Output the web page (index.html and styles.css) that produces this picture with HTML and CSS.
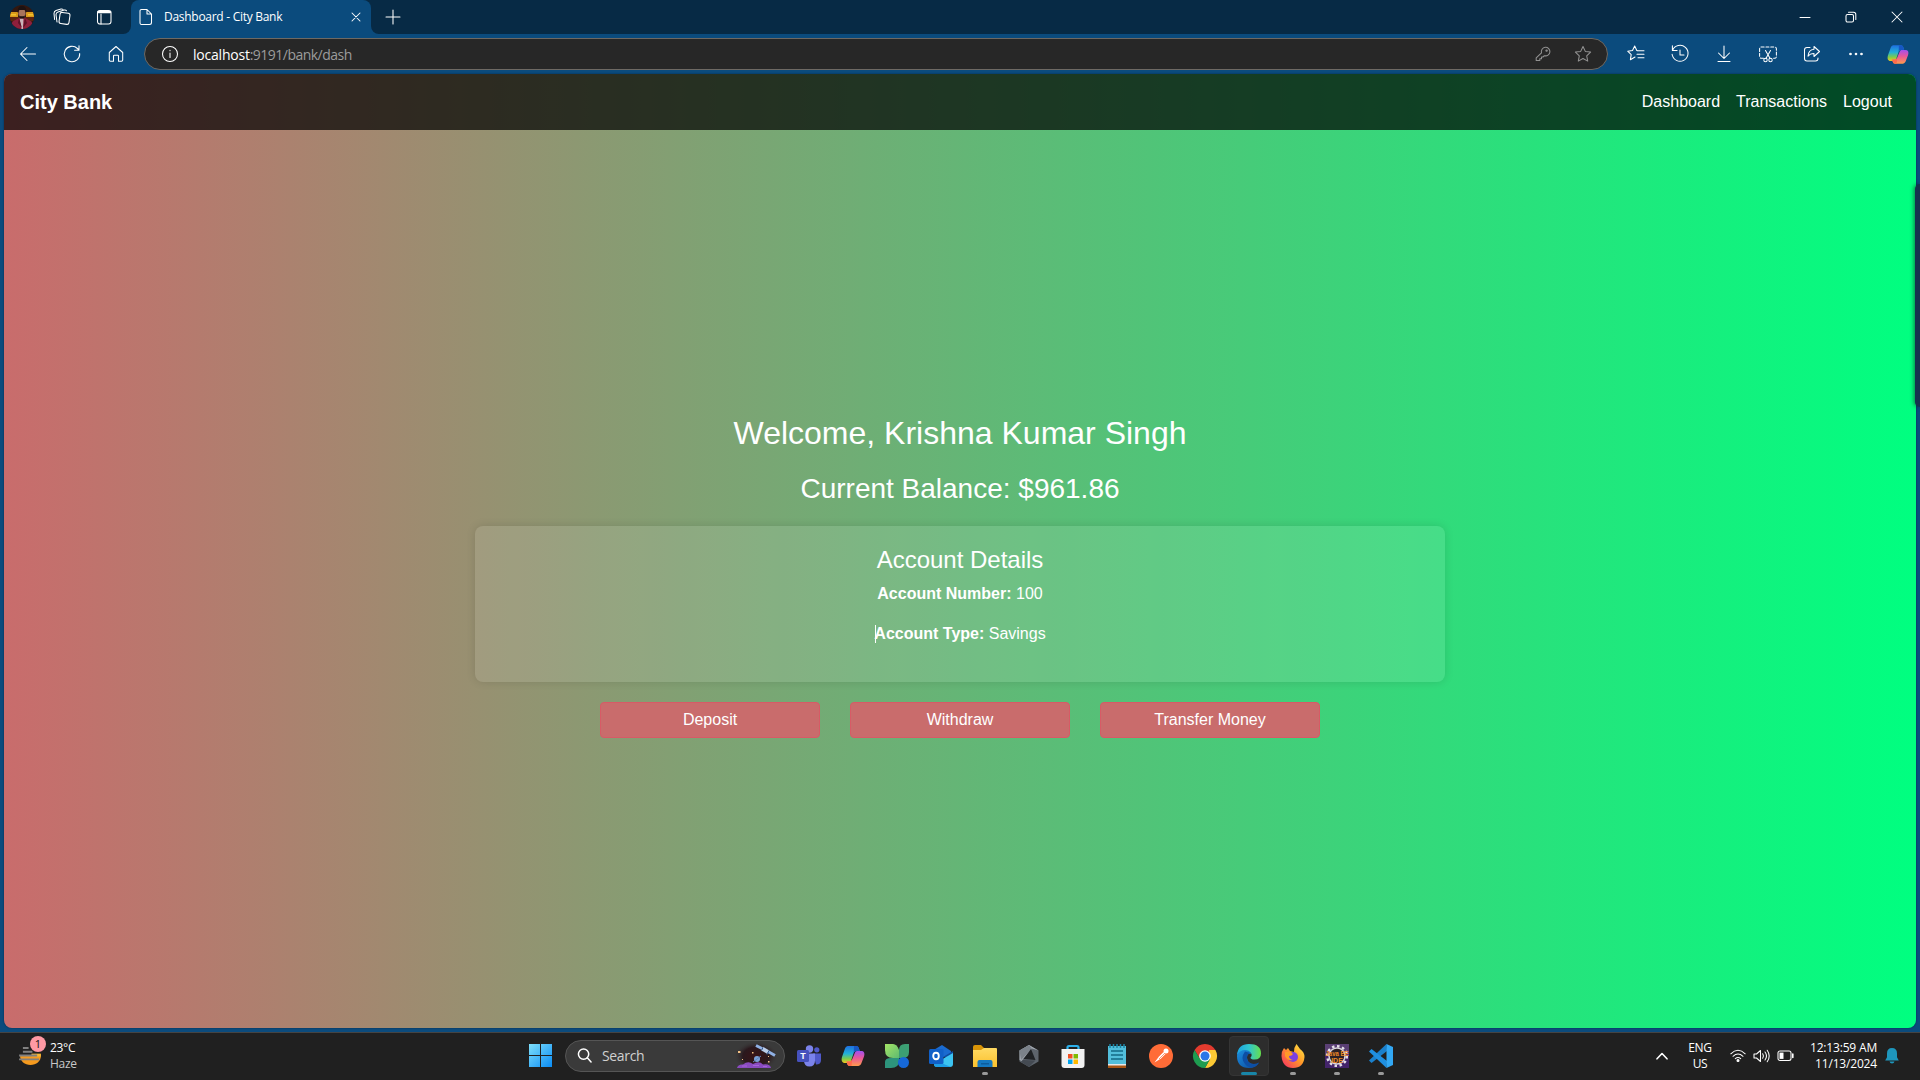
FILE: index.html
```html
<!DOCTYPE html>
<html lang="en">
<head>
<meta charset="utf-8">
<title>Dashboard - City Bank</title>
<link rel="stylesheet" href="styles.css">
</head>
<body>
<svg class="defs" width="0" height="0" aria-hidden="true">
  <defs>
    <linearGradient id="cpA" x1="0" y1="0" x2="0" y2="1"><stop offset="0" stop-color="#1f6fe0"/><stop offset=".45" stop-color="#22b0d8"/><stop offset=".75" stop-color="#7ccb4c"/><stop offset="1" stop-color="#f2c81c"/></linearGradient>
    <linearGradient id="cpB" x1="0" y1="0" x2="0" y2="1"><stop offset="0" stop-color="#a050f0"/><stop offset=".45" stop-color="#e6569c"/><stop offset="1" stop-color="#ff9a4c"/></linearGradient>
    <linearGradient id="win" x1="0" y1="0" x2="1" y2="1"><stop offset="0" stop-color="#7fe0fb"/><stop offset="1" stop-color="#0a8cf5"/></linearGradient>
    <linearGradient id="leaf" x1="0" y1="0" x2="1" y2="1"><stop offset="0" stop-color="#a4e465"/><stop offset="1" stop-color="#5fbb70"/></linearGradient>
    <linearGradient id="fold" x1="0" y1="0" x2="0" y2="1"><stop offset="0" stop-color="#ffda63"/><stop offset="1" stop-color="#fbc02d"/></linearGradient>
    <linearGradient id="edgeA" x1="0" y1="0" x2="1" y2="0"><stop offset="0" stop-color="#1ba3e2"/><stop offset=".5" stop-color="#30c5cf"/><stop offset="1" stop-color="#66e04c"/></linearGradient>
    <linearGradient id="edgeB" x1="0" y1="0" x2="1" y2="1"><stop offset="0" stop-color="#1b8fe0"/><stop offset="1" stop-color="#0c4a9c"/></linearGradient>
    <linearGradient id="fox" x1="1" y1="0" x2="0" y2="1"><stop offset="0" stop-color="#fff04a"/><stop offset=".45" stop-color="#ff9a28"/><stop offset="1" stop-color="#f5266a"/></linearGradient>
    <symbol id="copilot" viewBox="0 0 24 22">
      <path fill="url(#cpA)" d="M8 1h7c2 0 2.600 1.300 3.100 3L18.700 6h-3.200c-1.800 0-2.500 1-3 2.500L10 16c-.6 1.500-1.500 2-3 2H4C1 18 0 15.500 1 12L4 3.500C4.800 1.600 6 1 8 1z"/>
      <path fill="url(#cpB)" d="M16 21H9c-2 0-2.500-1.300-3-3l-.5-1.500h3c1.500 0 2.300-1 2.800-2.500L13.800 8c.5-1.400 1.300-2 3-2H20c3 0 4 2 3 5.500l-2.700 7C19.500 20.400 18 21 16 21z"/>
      <path fill="#1757c4" d="M13 1h2c2 0 2.600 1.300 3.100 3L18.700 6h-3.200c-1.500 0-2.300.7-2.800 2z"/>
      <path fill="#ff6a4a" d="M6 18l-.5-1.500h3c1.500 0 2.300-1 2.800-2.500L10.500 21H9c-2 0-2.500-1.300-3-3z"/>
    </symbol>
  </defs>
</svg>

<div class="desktop">
  <header class="tabbar">
    <div class="tab-left">
      <svg class="avatar" viewBox="0 0 24 24"><clipPath id="av"><circle cx="12" cy="12" r="12"/></clipPath><g clip-path="url(#av)"><path fill="#33170f" d="M0 0h24v24H0z"/><path fill="#d99a1a" d="M0 7h8v5H0zM16 7h8v5h-8z"/><path fill="#f3c22c" d="M1 9h5v1.500H1zM18 9h5v1.500h-5z"/><path fill="#5c2410" d="M0 12h24v4H0z"/><path fill="#8e1f3c" d="M0 24l2.500-7.500L9 13h6l6.500 3.500L24 24z"/><path fill="#c9b4ba" d="M9.500 13.500h4L13 24h-1.500z"/><path fill="#5e1228" d="M9 13l3 10-4-5zM15 13l-2 10 4-5z"/><ellipse cx="12" cy="8.500" rx="3.600" ry="4.800" fill="#a8745c"/><path fill="#1d1212" d="M7.800 8C7.300 2.500 9.500 1 12 1s4.800 1.500 4.200 7l-1.200-3H9zM9 10.500l1.500.7h3l1.500-.7-.8 3h-4.400z"/></g></svg>
      <svg class="ico" viewBox="0 0 20 20"><rect x="7.500" y="5.800" width="10" height="11.200" rx="2" transform="rotate(8 12.500 11.500)"/><path d="M5 15L4 7.800Q3.900 5.700 6 5l6.300-2q1.500-.3 2.200.8M2.600 12.500L2 6.500Q2 4.300 4 3.600L9 2q1.300-.3 2 .5"/></svg>
      <svg class="ico" viewBox="0 0 20 20"><rect x="3.500" y="3.500" width="13.500" height="13.500" rx="2.500"/><path d="M7 7v10" /><path d="M4.500 5h11.500" stroke-width="2.600"/></svg>
    </div>
    <div class="tab">
      <svg class="page-ico" viewBox="0 0 14 18"><path d="M2.500 1.500H8L12.500 6v8.500q0 2-2 2h-8q-1.500 0-1.500-2V3q0-1.500 1.500-1.500zM8 1.500V6h4.500"/></svg>
      <span class="tab-title">Dashboard - City Bank</span>
      <svg class="tab-close" viewBox="0 0 10 10"><path d="M1 1l8 8M9 1L1 9"/></svg>
    </div>
    <svg class="plus" viewBox="0 0 14 14"><path d="M7 0v14M0 7h14"/></svg>
    <div class="win-btns">
      <svg viewBox="0 0 12 12"><path d="M1 6.500h10"/></svg>
      <svg viewBox="0 0 12 12"><rect x="1" y="3.500" width="7.500" height="7.500" rx="1.500"/><path d="M3.500 1.300H8.500q2.300 0 2.300 2.300V8.500"/></svg>
      <svg viewBox="0 0 12 12"><path d="M1 1l10 10M11 1L1 11"/></svg>
    </div>
  </header>

  <div class="toolbar">
    <div class="nav-btns">
      <svg class="ico" viewBox="0 0 20 20"><path d="M17.500 10H2.500M9 3.500L2.500 10 9 16.500"/></svg>
      <svg class="ico" viewBox="0 0 20 20"><path d="M17.700 9.500a7.700 7.700 0 1 1-2.300-5L17 6M17 1.800V6.200h-4.400"/></svg>
      <svg class="ico" viewBox="0 0 20 20"><path d="M3.300 8.500L10 2.500l6.700 6V16q0 1.300-1.200 1.300h-3V12q0-.8-.8-.8H8.300q-.8 0-.8.800v5.300h-3Q3.300 17.300 3.300 16z"/></svg>
    </div>
    <div class="address">
      <svg class="info" viewBox="0 0 18 18"><circle cx="9" cy="9" r="7.500"/><path d="M9 8v4.500M9 5.300v.5"/></svg>
      <span class="url"><b>localhost</b>:9191/bank/dash</span>
      <svg class="dim key" viewBox="0 0 18 18"><path d="M7.500 7.800a4.300 4.300 0 1 1 2.900 2.900L9 12H7.500v1.700H5.800v1.800H2.200v-2.700z"/><circle cx="12.600" cy="5.600" r=".7"/></svg>
      <svg class="dim" viewBox="0 0 18 18"><path d="M9 1.500l2.300 4.900 5.300.7-3.900 3.700 1 5.300L9 13.500l-4.700 2.600 1-5.300L1.400 7.100l5.300-.7z"/></svg>
    </div>
    <div class="tools">
      <svg class="ico" viewBox="0 0 20 20"><path d="M11.500 6.700L10.800 6.500 8.700 2 6.500 6.500l-4.800.7 3.500 3.500-.8 5L9 13M11.800 6.800H18M11 10.300h7M12 13.800h6"/></svg>
      <svg class="ico" viewBox="0 0 20 20"><path d="M2.600 6.300a8 8 0 1 1-.5 4M2.400 1.800v4.700h4.700M10 6v5h4"/></svg>
      <svg class="ico" viewBox="0 0 20 20"><path d="M10 2v12.300M4.500 9L10 14.500 15.500 9M4 17.500h12"/></svg>
      <svg class="ico" viewBox="0 0 20 20"><path stroke-dasharray="3 1.800" d="M5.500 14.300H3.600q-2 0-2-2V5q0-2 2-2h12.800q2 0 2 2v7.300q0 2-2 2h-1.900"/><path d="M7.500 6.500l4.600 8M12.500 6.500l-4.600 8"/><circle cx="7.500" cy="16" r="1.700"/><circle cx="12.500" cy="16" r="1.700"/></svg>
      <svg class="ico" viewBox="0 0 20 20"><path d="M8 3.500H5Q2.500 3.500 2.500 6v8.500Q2.500 17 5 17h8.500q2.500 0 2.500-2.500V14M12 2.500L17.500 7.500 12 12.500v-3q-4 0-6 2.700.5-6.500 6-7z"/></svg>
      <svg class="ico dots" viewBox="0 0 20 20"><circle cx="4.500" cy="10" r=".8"/><circle cx="10" cy="10" r=".8"/><circle cx="15.500" cy="10" r=".8"/></svg>
      <svg class="copilot"><use href="#copilot"/></svg>
    </div>
  </div>

  <div class="frame">
    <div class="page">
      <nav class="navbar">
        <span class="brand">City Bank</span>
        <span class="links"><a>Dashboard</a><a>Transactions</a><a>Logout</a></span>
      </nav>
      <main class="content">
        <h2>Welcome, Krishna Kumar Singh</h2>
        <h3>Current Balance: $961.86</h3>
        <section class="card">
          <h4>Account Details</h4>
          <p><b>Account Number:</b> 100</p>
          <p><span class="caret"></span><b>Account Type:</b> Savings</p>
        </section>
        <div class="actions"><a class="btn">Deposit</a><a class="btn">Withdraw</a><a class="btn">Transfer Money</a></div>
      </main>
    </div>
    <div class="side-handle"></div>
  </div>

  <footer class="taskbar">
    <div class="weather">
      <div class="haze">
        <svg viewBox="0 0 24 20"><path fill="#f59a1e" d="M1 9h22c0 6-5 10-11 10S1 15 1 9z"/><path fill="#f7b733" d="M13 7h10v3H13z"/><path stroke="#808080" stroke-width="2" d="M4 1h6M4 5h10M0 9h19M0 13h21" fill="none"/></svg>
        <span class="badge">1</span>
      </div>
      <div class="w-text"><span>23°C</span><span class="cond">Haze</span></div>
    </div>

    <div class="apps">
      <svg class="start" viewBox="0 0 23 23"><path fill="url(#win)" d="M0 0h11v11H0zM12 0h11v11H12zM0 12h11v11H0zM12 12h11v11H12z"/></svg>
      <div class="search">
        <svg class="lens" viewBox="0 0 16 16"><circle cx="7" cy="6.500" r="5.500"/><path d="M11 10.500l4 4.500"/></svg>
        <span>Search</span>
        <svg class="art" viewBox="0 0 44 28"><defs><radialGradient id="sp"><stop offset="0" stop-color="#3a1216"/><stop offset=".6" stop-color="#2a181d"/><stop offset="1" stop-color="#3a3a3a" stop-opacity="0"/></radialGradient></defs><ellipse cx="22" cy="14" rx="22" ry="15" fill="url(#sp)"/><path fill="#8a4bc0" d="M3 26q1-4 6-3.500 5-4 10-.5 6-3.500 10 .5 7-1 8 3.500z"/><path fill="#a466d8" d="M8 23.500h5v1H8zM19 23h6v1h-6zM29 24h4v1h-4z"/><path stroke="#8fb0e4" stroke-width="3" d="M22 3.500l6 3M34 9.500l7 4"/><path stroke="#b9cbe8" stroke-width="4" d="M28 6.500l6 3.500"/><path stroke="#35588e" stroke-width="1" d="M29 5.500l-1.500 3M35 8.500l-2 4"/><circle cx="23" cy="17" r="3" fill="#7aa0d8"/><path stroke="#5f84c0" d="M19 20l8-6"/><path fill="#f2c083" d="M4 9h2.500v2H4zM18 10h1.500v1.500H18zM34 19h1.500v1.500H34zM8 17h1v1H8zM34 14h1v1h-1z"/></svg>
      </div>
      <div class="app"><svg viewBox="0 0 24 24"><circle cx="12.500" cy="5" r="3.700" fill="#7b83eb"/><circle cx="19.800" cy="5.800" r="2.600" fill="#5059c9"/><path fill="#5059c9" d="M16 9.500h8v6.500q0 4.500-5 4.500z"/><path fill="#7b83eb" d="M7 9.500h11v7q0 6-5.500 6T7 16.500z"/><rect y="6" width="12" height="12" rx="1.500" fill="#4651bd"/><text x="6" y="15.300" class="glyph teams">T</text></svg></div>
      <div class="app"><svg viewBox="0 0 24 24"><use href="#copilot" y="1" width="24" height="22"/></svg></div>
      <div class="app"><svg viewBox="0 0 24 24"><path fill="url(#leaf)" d="M0 0h8q4 0 6 6v8H8q-8 0-8-8z"/><path fill="#3c9f73" d="M24 0h-4q-6 0-6 6v8h4q6 0 6-6z"/><path fill="#2d947c" d="M0 24h6q8 0 8-7v-3H6q-6 0-6 4z"/><circle cx="18.500" cy="18.500" r="5.500" fill="#1668d8"/></svg></div>
      <div class="app"><svg viewBox="0 0 24 24"><path fill="#1a6bd0" d="M3 7l10-6 9 6v6H3z"/><path fill="#0f4aa0" d="M14 13l10-6v8z"/><path fill="#3cc4f2" d="M24 9v11q0 3-3 3H8q-3 0-3-3z"/><path fill="#1d9ee6" d="M5 16l17 7H8q-3 0-3-3z"/><rect y="5" width="14.500" height="15" rx="1.500" fill="#1160c8"/><ellipse cx="7" cy="12" rx="2.800" ry="3.300" fill="none" stroke="#fff" stroke-width="1.900"/></svg></div>
      <div class="app run"><svg viewBox="0 0 24 24"><path fill="#d99407" d="M0 3q0-2 2-2h6l3 3v5H0z"/><path fill="url(#fold)" d="M0 6h8l3-2h12q1 0 1 1v18H0z"/><path fill="#1578c0" d="M4.500 23v-5q0-2 2-2h11q2 0 2 2v5z"/><path fill="#0d5c9c" d="M8 19h8v1.500H8z"/></svg></div>
      <div class="app"><svg viewBox="0 0 24 24"><path fill="#5d646c" d="M12 1l9.500 5.500v11L12 23l-9.500-5.500v-11z"/><path fill="#a3a9b0" d="M12 1l9.500 5.500L15 4.500 4.500 17l-2-1V6.500z"/><path fill="#7b828a" d="M12 1l3 3.500L4 16 2.500 6.500z"/><path fill="#1f2225" d="M14 5l4.500 11L6.500 15z"/><path fill="#444a52" d="M6 16l12.500.5L12 23l-8-5z"/></svg></div>
      <div class="app"><svg viewBox="0 0 24 24"><path fill="none" stroke="#2cb0ea" stroke-width="2.200" d="M6.500 6V3.500Q6.500 2 8 2h8q1.500 0 1.500 1.500V6"/><path fill="#f2f2f2" d="M.5 5h23v16q0 3-3 3h-17q-3 0-3-3z"/><path fill="#f25022" d="M7 10h4.500v4.500H7z"/><path fill="#7fba00" d="M12.500 10H17v4.500h-4.500z"/><path fill="#00a4ef" d="M7 15.500h4.500V20H7z"/><path fill="#ffb900" d="M12.500 15.500H17V20h-4.500z"/></svg></div>
      <div class="app"><svg viewBox="0 0 24 24"><path fill="#a85514" d="M3 20h18v4H3z"/><path fill="#e8e8e8" d="M3 18h18v3.500H3z"/><path fill="#52bedb" d="M3 2h18v18H3z"/><path stroke="#136a86" stroke-width="1.600" d="M6 7h12M6 11h12M6 15h12"/><path stroke="#1c86a6" stroke-width="1.500" d="M5 0v4M8.500 0v4M12 0v4M15.500 0v4M19 0v4"/></svg></div>
      <div class="app"><svg viewBox="0 0 24 24"><circle cx="12" cy="12" r="12" fill="#ff6c37"/><path fill="#fff" d="M10 12.500l4.500-4.500 2 2L12 14.500l-6.500 4z"/><circle cx="17" cy="7" r="2.500" fill="#fff"/><path stroke="#ff6c37" stroke-width=".7" d="M10 15l6-6"/></svg></div>
      <div class="app"><svg viewBox="0 0 24 24"><path fill="#e33b2e" d="M1.600 6A12 12 0 0 1 22.400 6L12 12z"/><path fill="#e33b2e" d="M1.600 6H12v6l-5 3z"/><path fill="#fcc934" d="M22.400 6A12 12 0 0 1 12 24l5-9-1-9z"/><path fill="#1e9c50" d="M1.600 6A12 12 0 0 0 12 24l5-9H7z"/><circle cx="12" cy="12" r="5.800" fill="#fff"/><circle cx="12" cy="12" r="4.500" fill="#2a76e8"/></svg></div>
      <div class="app active"><svg viewBox="0 0 24 24"><path fill="url(#edgeB)" d="M0 12Q0 5 7 5q7 0 7 5-4-1-4 4 1 6 7 6 3 0 5-1.500Q18.500 24 12 24 0 24 0 12z"/><path fill="url(#edgeA)" d="M0 11Q1 0 12 0q12 0 12 9.500 0 6-6.500 6-4 0-4-2 2-2 .5-4.500Q12 6 8 6 3 6 0 11z"/><path fill="#0d4fa5" d="M8 7.500Q3 14 8 20q3 4 8 3.300 4-.9 6-4.800-2 1.500-6 1.500-6-1-6-6 0-4 3-5z"/></svg></div>
      <div class="app run"><svg viewBox="0 0 24 24"><path fill="url(#fox)" d="M.5 12q0-5 2.500-8l2 2 2-2 2 3 4 1q0-5 2.500-8L19 5q4.500 3 4.500 8Q22.500 24 12 24T.5 12z"/><circle cx="12" cy="13" r="5" fill="#7b3fe0"/><path fill="#ff9a28" d="M4 8h6l2 2q-1 2-4 2 0 3 4 4-6 1-8-4z"/></svg></div>
      <div class="app run"><svg viewBox="0 0 24 24"><path fill="#5a3f74" d="M0 0h24v12H0z"/><path fill="#43246a" d="M0 12h24v12H0z"/><circle cx="12" cy="12" r="9.800" fill="none" stroke="#e4e0e8" stroke-width="2.500" stroke-dasharray="2.500 2.600"/><circle cx="12" cy="12" r="8" fill="#2c2026" stroke="#d8d4dc" stroke-width="1.500"/><text x="12" y="12" class="glyph java" textLength="23" lengthAdjust="spacingAndGlyphs">Java EE</text><text x="12" y="18.500" class="glyph java">IDE</text></svg></div>
      <div class="app run"><svg viewBox="0 0 24 24"><path fill="#1a80cc" d="M17.500 0L0 16.500 2.500 19 18 7z"/><path fill="#1f8fe0" d="M17.500 24L0 7.500 2.500 5 18 17z"/><path fill="#32a8f4" d="M17.500 0L24 3v18l-6.500 3z"/></svg></div>
    </div>

    <div class="tray">
      <svg class="chev" viewBox="0 0 12 8"><path d="M1 6.800L6 1.500l5 5.300"/></svg>
      <div class="lang"><span>ENG</span><span>US</span></div>
      <svg class="wifi" viewBox="0 0 16 13"><path d="M.8 4.800q7.200-7 14.400 0M3 7.300q5-4.600 10 0M5.300 9.700q2.700-2.300 5.400 0"/><circle cx="8" cy="11.400" r="1" fill="#fff"/></svg>
      <svg class="vol" viewBox="0 0 17 14"><path d="M1 5v4h2.500L7.500 12.500v-11L3.500 5zM9.700 4.800q1.500 2.200 0 4.400M12 3q3 4 0 8M14.200 1.200q4 5.800 0 11.600"/></svg>
      <svg class="bat" viewBox="0 0 17 12"><rect x="1" y="1" width="13" height="9.500" rx="2"/><path fill="#fff" stroke="none" d="M2.500 2.600h4v6.300h-4z"/><path d="M15.800 4v3.500" stroke-width="1.600"/></svg>
      <div class="clock"><span>12:13:59 AM</span><span>11/13/2024</span></div>
      <svg class="bell" viewBox="0 0 14 16"><path fill="#1e96bc" d="M7 0q5 0 5 5.500v3.700l1.800 3.300H.2L2 9.200V5.500Q2 0 7 0zM4.500 13.500h5Q9 15.500 7 15.500t-2.500-2z"/></svg>
    </div>
  </footer>
</div>
</body>
</html>
```
FILE: styles.css
```css
* { box-sizing: border-box; }
body { margin: 0; background: #0b4b7d; font-family: "Liberation Sans", Arial, sans-serif; }
svg { display: block; flex: none; overflow: visible; }
.defs { position: absolute; }
.desktop { width: 1920px; height: 1080px; display: flex; flex-direction: column; overflow: hidden; }

.ico, .page-ico, .tab-close, .plus, .win-btns svg, .info, .dim, .lens, .chev, .wifi, .vol, .bat {
  fill: none; stroke: #fff; stroke-width: 1.05; stroke-linecap: round; stroke-linejoin: round;
}
.ico { width: 20px; height: 20px; }

.tabbar { height: 34px; flex: none; background: #0b4b7d; display: flex; align-items: stretch; font-family: "Open Sans", "Noto Sans", sans-serif; }
.tab-left { width: 131px; background: #072a45; border-bottom-right-radius: 8px; display: flex; align-items: center; padding-left: 10px; }
.avatar { width: 24px; height: 24px; margin-right: 18px; }
.tab-left .ico + .ico { margin-left: 22px; }
.tab { width: 240px; display: flex; align-items: center; padding-left: 8px; background: #0b4b7d; box-shadow: 0 -8px 0 #072a45; border-radius: 8px 8px 0 0; }
.page-ico { width: 14px; height: 18px; }
.tab-title { color: #fff; font-size: 12px; letter-spacing: -0.28px; margin-left: 11px; flex: 1; position: relative; top: -1px; }
.tab-close { width: 10px; height: 10px; margin-right: 10px; }
.plus { width: 43px; height: 34px; padding: 10px 14px 10px 15px; background: #072a45; border-bottom-left-radius: 8px; }
.win-btns { flex: 1; background: #072a45; display: flex; justify-content: flex-end; align-items: center; gap: 34px; padding-right: 17px; }
.win-btns svg { width: 12px; height: 12px; }

.toolbar { height: 40px; flex: none; display: flex; align-items: center; padding-left: 18px; }
.nav-btns { display: flex; gap: 24px; width: 126px; }
.address { width: 1464px; height: 32px; border: 1px solid #6e6963; border-radius: 16px; background: #272727; display: flex; align-items: center; padding: 0 15px 0 16px; }
.info { width: 18px; height: 18px; }
.url { flex: 1; margin-left: 14px; font: 14px "Open Sans", "Noto Sans", sans-serif; letter-spacing: -0.52px; color: #9c9c9c; }
.url b { color: #fff; font-weight: 400; letter-spacing: -0.22px; }
.dim { width: 18px; height: 18px; stroke: #929292; }
.key { margin-right: 22px; }
.tools { display: flex; align-items: center; gap: 24px; margin-left: 18px; }
.dots circle { fill: #fff; }
.copilot { width: 22px; height: 21px; margin-left: -3px; }

.frame { height: 958px; flex: none; padding: 0 4px; position: relative; }
.page { height: 954px; border-radius: 8px; overflow: hidden; background: linear-gradient(to right, #c96c6c, #00ff80); display: flex; flex-direction: column; box-shadow: 0 0 2px #05294a; }
.side-handle { position: absolute; right: 0; top: 110px; width: 5px; height: 223px; background: #16324f; border-radius: 6px 0 0 6px; box-shadow: -1px 0 4px rgba(0,0,0,.5); }

.navbar { height: 56px; flex: none; background: rgba(0,0,0,.7); display: flex; align-items: center; justify-content: space-between; padding: 0 24px 0 16px; color: #fff; }
.brand { font-size: 20px; font-weight: 700; }
.links { display: flex; gap: 16px; font-size: 16px; }

.content { flex: 1; display: flex; flex-direction: column; align-items: center; padding-top: 283px; color: #fff; }
h2, h3, h4, p { margin: 0; font-weight: 400; }
h2 { font-size: 32px; line-height: 40px; }
h3 { font-size: 28px; line-height: 34px; margin-top: 19px; }
.card { width: 970px; height: 156px; margin-top: 20px; padding-top: 19px; border-radius: 8px; background: rgba(255,255,255,.1); box-shadow: 0 0 10px rgba(0,0,0,.12); text-align: center; }
.card h4 { font-size: 24px; line-height: 29px; }
.card p { font-size: 16px; line-height: 24px; margin: 8px 0 16px; }
.card p + p { margin-top: 0; }
.caret { display: inline-block; width: 1px; height: 18px; margin-right: -2px; margin-left: 1px; background: #fff; vertical-align: -4px; }
.actions { display: flex; gap: 30px; margin-top: 20px; }
.btn { width: 220px; height: 36px; border: 1px solid #d85a66; border-radius: 4px; background: #c96c6c; font-size: 16px; line-height: 33px; text-align: center; }

.taskbar { height: 48px; flex: none; background: #202020; border-top: 1px solid #444; padding-bottom: 2px; display: grid; grid-template-columns: 528px 1fr 270px; font-family: "Open Sans", "Noto Sans", sans-serif; font-size: 12px; color: #fff; }
.weather { display: flex; align-items: center; padding-left: 19px; }
.haze { width: 24px; height: 20px; margin-top: 3px; position: relative; }
.haze svg { width: 23px; height: 19px; }
.badge { position: absolute; left: 11px; top: -11px; width: 16px; height: 16px; border-radius: 50%; background: #ff99a4; color: #111; font-size: 11px; line-height: 16px; text-align: center; }
.w-text { display: flex; flex-direction: column; line-height: 16px; margin-left: 7px; letter-spacing: -0.3px; }
.cond { color: #c8c8c8; letter-spacing: -0.3px; }
.apps { display: flex; align-items: center; }
.start { width: 23px; height: 23px; margin: 0 13px 0 1px; }
.search { width: 220px; height: 32px; border: 1px solid #555; border-radius: 16px; background: #3a3a3a; display: flex; align-items: center; padding-left: 11px; margin-right: 2px; }
.lens { width: 15px; height: 15px; stroke-width: 1.6; }
.search span { flex: 1; margin-left: 10px; font-size: 14px; letter-spacing: -0.35px; color: #d0d0d0; }
.art { width: 44px; height: 28px; margin-right: 6px; }
.app { width: 40px; height: 40px; margin: 0 2px; border-radius: 4px; display: flex; justify-content: center; align-items: center; position: relative; }
.app svg { width: 24px; height: 24px; }
.active { background: #2d2d2d; border: 1px solid #353535; }
.run::after, .active::after { content: ""; position: absolute; bottom: 1px; left: 17px; width: 6px; height: 3px; border-radius: 2px; background: #999; }
.active::after { left: 11px; bottom: 0; width: 16px; background: #1886a8; }
.glyph { text-anchor: middle; font-weight: 700; font-family: "Liberation Sans", sans-serif; }
.teams { fill: #fff; font-size: 9px; }
.java { fill: #ee8a25; font-size: 7px; }
.tray { display: flex; align-items: center; padding-left: 6px; line-height: 16px; }
.chev { width: 12px; height: 8px; stroke-width: 1.6; }
.lang, .clock { display: flex; flex-direction: column; }
.lang { width: 30px; margin-left: 17px; align-items: center; letter-spacing: -0.3px; }
.wifi { width: 16px; height: 13px; margin-left: 15px; }
.vol { width: 17px; height: 14px; margin-left: 7px; }
.bat { width: 17px; height: 12px; margin-left: 7px; }
.clock { width: 76px; margin-left: 7px; align-items: flex-end; letter-spacing: -0.18px; white-space: nowrap; }
.bell { width: 14px; height: 16px; margin-left: 8px; }
```
